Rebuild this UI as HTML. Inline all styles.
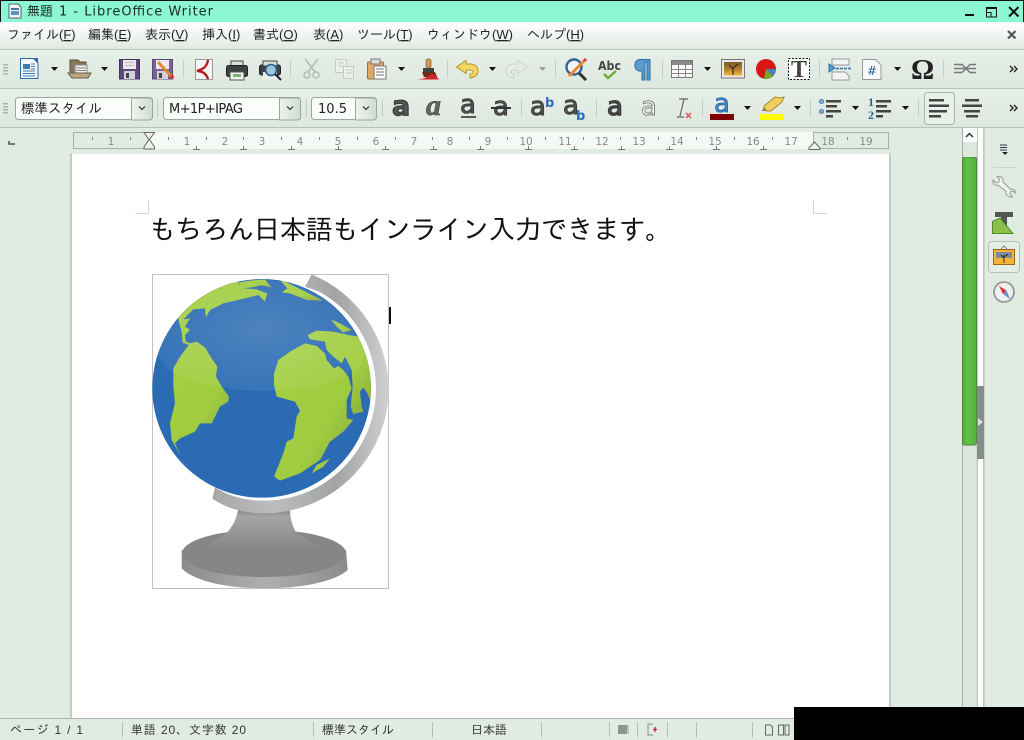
<!DOCTYPE html>
<html lang="ja"><head><meta charset="utf-8"><title>無題 1 - LibreOffice Writer</title>
<style>
html,body{margin:0;padding:0;background:#e0ebe2;width:1024px;height:740px;overflow:hidden}
svg{display:block;position:absolute;left:0;top:0}
text{font-family:"Liberation Sans","IPAGothic","Noto Sans CJK JP",sans-serif;white-space:pre}
.m{font-size:13px;fill:#222}
.r{font-size:10.5px;fill:#888;text-anchor:middle;font-family:"DejaVu Sans","Liberation Sans",sans-serif}
.s{font-size:12px;fill:#333}
.a{font-family:"DejaVu Sans","Liberation Sans",sans-serif;font-size:26px;fill:#555;stroke:#3a3a3a;stroke-width:1}
</style></head><body>
<svg width="1024" height="740" viewBox="0 0 1024 740" xmlns="http://www.w3.org/2000/svg">
<defs>
<linearGradient id="mg" x1="0" y1="0" x2="0" y2="1"><stop offset="0" stop-color="#fff"/><stop offset=".35" stop-color="#f4f8f5"/><stop offset="1" stop-color="#dfeae1"/></linearGradient>
<linearGradient id="tb" x1="0" y1="0" x2="0" y2="1"><stop offset="0" stop-color="#e6efe8"/><stop offset="1" stop-color="#dde8df"/></linearGradient>
<linearGradient id="sb" x1="0" y1="0" x2="1" y2="0"><stop offset="0" stop-color="#4fae3c"/><stop offset=".35" stop-color="#62c148"/><stop offset="1" stop-color="#54b03e"/></linearGradient>
<linearGradient id="cb" x1="0" y1="0" x2="1" y2="0"><stop offset="0" stop-color="#eef4ef"/><stop offset="1" stop-color="#cfdcd2"/></linearGradient>
<linearGradient id="arc" x1="0" y1="0" x2="1" y2="0"><stop offset="0" stop-color="#a5a6a8"/><stop offset=".35" stop-color="#bcbdbf"/><stop offset=".7" stop-color="#a2a3a5"/><stop offset="1" stop-color="#cfd0d1"/></linearGradient>
<linearGradient id="stem" x1="0" y1="0" x2="0" y2="1"><stop offset="0" stop-color="#7f8082"/><stop offset=".2" stop-color="#a4a5a7"/><stop offset="1" stop-color="#848586"/></linearGradient>
<linearGradient id="base" x1="0" y1="0" x2="1" y2="0"><stop offset="0" stop-color="#8a8b8d"/><stop offset=".5" stop-color="#aeafb1"/><stop offset="1" stop-color="#8a8b8d"/></linearGradient>
<linearGradient id="land" x1="0" y1="0" x2="1" y2="1"><stop offset="0" stop-color="#a4cf45"/><stop offset=".6" stop-color="#a0cc40"/><stop offset="1" stop-color="#8aa93c"/></linearGradient>
<linearGradient id="pic" x1="0" y1="0" x2="0" y2="1"><stop offset="0" stop-color="#7d5a2c"/><stop offset=".55" stop-color="#b07f30"/><stop offset="1" stop-color="#f5bd3f"/></linearGradient>
<radialGradient id="hl" cx=".5" cy=".45" r=".6"><stop offset="0" stop-color="#fff" stop-opacity=".16"/><stop offset="1" stop-color="#fff" stop-opacity=".05"/></radialGradient>
<clipPath id="gc"><circle cx="395" cy="385" r="328"/></clipPath>
<path id="dd" d="M0 0h7l-3.500 4z" fill="#111"/>
<path id="more" d="M0 0l3 3-3 3M4 0l3 3-3 3" fill="none" stroke="#222" stroke-width="1.400"/>
<g id="grip" fill="#a9b5ab"><rect width="5" height="1.500"/><rect y="3" width="5" height="1.500"/><rect y="6" width="5" height="1.500"/><rect y="9" width="5" height="1.500"/></g>
</defs>

<rect width="1024" height="740" fill="#e0ebe2"/>
<!-- title bar -->
<rect width="1024" height="22" fill="#8cf7d3"/>
<rect width="1024" height="1" fill="#111"/><rect width="1" height="22" fill="#111"/><rect x="1023" width="1" height="22" fill="#111"/>
<path d="M9 4h9l3 3v11H9z" fill="#f4f7fa" stroke="#55607a"/><rect x="11" y="8" width="8" height="2" fill="#3f78ad"/><rect x="11" y="11" width="8" height="4" fill="#5f93bf"/>
<text x="27" y="15.500" style="font-size:13px;fill:#1b2b26">無題</text>
<text x="59" y="15.500" style="font-size:13px;fill:#1b2b26;font-family:'DejaVu Sans',sans-serif" textLength="154">1 - LibreOffice Writer</text>
<rect x="965" y="14" width="9" height="2" fill="#111"/>
<path d="M986.500 7.500h10v9.500h-10zM986.500 12.500h4.500v4.500" fill="none" stroke="#111"/><rect x="986" y="7" width="11" height="2" fill="#111"/>
<path d="M1009 7l9.500 9.500M1018.500 7l-9.500 9.500" stroke="#111" stroke-width="2"/>

<!-- menu -->
<rect y="22" width="1024" height="27" fill="url(#mg)"/>
<text class="m" x="7" y="39">ファイル(<tspan text-decoration="underline">F</tspan>)</text>
<text class="m" x="88" y="39">編集(<tspan text-decoration="underline">E</tspan>)</text>
<text class="m" x="145" y="39">表示(<tspan text-decoration="underline">V</tspan>)</text>
<text class="m" x="202" y="39">挿入(<tspan text-decoration="underline">I</tspan>)</text>
<text class="m" x="253" y="39">書式(<tspan text-decoration="underline">O</tspan>)</text>
<text class="m" x="313" y="39">表(<tspan text-decoration="underline">A</tspan>)</text>
<text class="m" x="357" y="39">ツール(<tspan text-decoration="underline">T</tspan>)</text>
<text class="m" x="427" y="39">ウィンドウ(<tspan text-decoration="underline">W</tspan>)</text>
<text class="m" x="527" y="39">ヘルプ(<tspan text-decoration="underline">H</tspan>)</text>
<path d="M1008 31l7.500 7.500M1015.500 31l-7.500 7.500" stroke="#555" stroke-width="2.200"/>

<!-- toolbars -->
<rect y="49" width="1024" height="1" fill="#b9c8bc"/>
<rect y="50" width="1024" height="38" fill="url(#tb)"/>
<rect y="88" width="1024" height="1" fill="#b4c4b8"/>
<rect y="89" width="1024" height="38" fill="url(#tb)"/>
<rect y="127" width="1024" height="1" fill="#b4c4b8"/>
<use href="#grip" x="3" y="64"/><use href="#grip" x="3" y="103"/>
<g fill="#c3cfc6">
<rect x="183" y="60" width="1" height="18"/><rect x="290" y="60" width="1" height="18"/><rect x="447" y="60" width="1" height="18"/><rect x="555" y="60" width="1" height="18"/><rect x="662" y="60" width="1" height="18"/><rect x="819" y="60" width="1" height="18"/><rect x="943" y="60" width="1" height="18"/>
<rect x="157" y="99" width="1" height="18"/><rect x="306" y="99" width="1" height="18"/><rect x="382" y="99" width="1" height="18"/><rect x="521" y="99" width="1" height="18"/><rect x="596" y="99" width="1" height="18"/><rect x="702" y="99" width="1" height="18"/><rect x="810" y="99" width="1" height="18"/><rect x="918" y="99" width="1" height="18"/>
</g>
<use href="#dd" x="51" y="67"/><use href="#dd" x="101" y="67"/><use href="#dd" x="398" y="67"/><use href="#dd" x="489" y="67"/><use href="#dd" x="539" y="67" opacity=".35"/><use href="#dd" x="704" y="67"/><use href="#dd" x="894" y="67"/>
<use href="#dd" x="744" y="106"/><use href="#dd" x="794" y="106"/><use href="#dd" x="852" y="106"/><use href="#dd" x="902" y="106"/>
<use href="#more" x="1010" y="66"/><use href="#more" x="1010" y="105"/>

<!-- new doc -->
<path d="M20.500 58.500h13l4.500 4.500v15.500h-17.500z" fill="#f5f8fb" stroke="#2a6aa0"/><path d="M33 58l5 0v5z" fill="#2a6aa0"/>
<rect x="23" y="64" width="7" height="5" fill="#3a7db5"/><path d="M31 64h4M31 66.500h4M31 69h4M23 71h12M23 73.500h12M23 76h12" stroke="#3a7db5" stroke-width="1"/>
<!-- open -->
<path d="M70 60h8l2 2h6v12H70z" fill="#8a7658" stroke="#5c4c36"/><rect x="75" y="65" width="12" height="9" fill="#eee" stroke="#888"/><path d="M76 68h10M76 70.500h10" stroke="#888"/><path d="M68 73h23l-3 5H72z" fill="#b9a78a" stroke="#6e5d44"/>
<!-- save -->
<path d="M119.500 59.500h20v19.500h-20z" fill="#5d4a78" stroke="#43335c"/><rect x="123" y="60" width="13" height="9" fill="#e9e9ef"/><path d="M125 62.500h9M125 65.500h9" stroke="#bbb"/><rect x="124" y="71" width="11" height="8" fill="#d3d0db"/><rect x="126" y="73" width="3" height="5" fill="#444"/>
<!-- save as -->
<path d="M152.500 59.500h20v19.500h-20z" fill="#7a6292" stroke="#5c4873"/><rect x="156" y="60" width="13" height="9" fill="#e9e9ef"/><rect x="157" y="71" width="11" height="8" fill="#d3d0db"/><rect x="159" y="73" width="3" height="5" fill="#444"/>
<path d="M158 62l13 14" stroke="#e58a2a" stroke-width="3"/><circle cx="172" cy="77" r="2" fill="#d33"/>
<!-- pdf -->
<rect x="195.500" y="59.500" width="17" height="20" fill="#f5f5f5" stroke="#999"/><path d="M208 60c-1 7-5 9-11 11 5 0 9 2 11 8" fill="none" stroke="#b71c1c" stroke-width="2.400"/>
<!-- print -->
<path d="M231 61h12v5h-12z" fill="#ddd" stroke="#444"/><rect x="226.500" y="65.500" width="21" height="11" rx="2" fill="#3e4245" stroke="#222"/><rect x="230" y="72" width="14" height="8" fill="#eef5ec" stroke="#555"/><rect x="233" y="74" width="8" height="3" fill="#7cb46b"/>
<!-- preview -->
<rect x="259.500" y="65" width="21" height="10" rx="2" fill="#3e4245" stroke="#222"/><rect x="263" y="61" width="14" height="5" fill="#ddd" stroke="#444"/><rect x="263" y="72" width="14" height="7" fill="#eee"/><circle cx="271" cy="70" r="5.500" fill="#9bc4dd" stroke="#2b5d8f" stroke-width="1.600"/><path d="M275 74l6 6" stroke="#223" stroke-width="2"/>
<!-- cut -->
<g fill="none" stroke="#b5bdb7" stroke-width="1.600"><path d="M305 59l10 13M318 59l-10 13"/><circle cx="307" cy="75" r="3"/><circle cx="316" cy="75" r="3"/></g>
<!-- copy -->
<g fill="#eaf0eb" stroke="#c2cbc4"><rect x="335.500" y="59.500" width="11" height="13"/><rect x="343.500" y="66.500" width="10" height="12"/><path d="M338 63h6M338 66h6M346 70h6M346 73h6" fill="none"/></g>
<!-- paste -->
<rect x="367.500" y="62" width="16" height="17" rx="1" fill="#dfa866" stroke="#9b7136"/><rect x="371" y="59" width="9" height="5" fill="#ddd" stroke="#777"/><rect x="374" y="66" width="12" height="13" fill="#fafafa" stroke="#777"/><path d="M376 69h8M376 72h8M376 75h8" stroke="#777"/>
<!-- brush -->
<rect x="426" y="59" width="5" height="9" rx="2" fill="#cf9c53" stroke="#8b6326" stroke-width=".8"/><path d="M423 68h11v4h-11z" fill="#444"/><path d="M422 72h13l2 5h-13z" fill="#6e2a1c"/><path d="M416 79.500c6 0 12-2 16-6 3 2 6 4 7 6z" fill="#d4232b"/>
<!-- undo -->
<path d="M456.500 67L466 60.500V64H470C480.500 64 481 77 470 78V74C474 74 474 70 470 70H466V73.500Z" fill="#f3d963" stroke="#b8962a"/>
<!-- redo -->
<path d="M527.500 67L518 60.500V64H514C503.500 64 503 77 514 78V74C510 74 510 70 514 70H518V73.500Z" fill="#e4ebe6" stroke="#c9d2cb"/>
<!-- find -->
<circle cx="574" cy="67" r="7.500" fill="#f2f5f8" stroke="#3a5f93" stroke-width="2.400"/><path d="M579 73l7 7" stroke="#333" stroke-width="3"/><path d="M569 76l15-15" stroke="#e58a2a" stroke-width="3"/><path d="M584 61l2-2" stroke="#d33" stroke-width="3"/>
<!-- Abc -->
<text x="598" y="70" textLength="23" lengthAdjust="spacingAndGlyphs" style="font-family:'DejaVu Sans',sans-serif;font-weight:bold;font-size:12px;fill:#444">Abc</text>
<path d="M604 74l4 4 8-7" fill="none" stroke="#6cab2f" stroke-width="2.400"/>
<!-- pilcrow -->
<path d="M650 59.500H640C633 59.500 633 71 640 71H642V80H645V62H647V80H650Z" fill="#5a9ad0" stroke="#2d6ca5"/>
<!-- table -->
<rect x="671.500" y="60.500" width="21" height="17" fill="#fafafa" stroke="#777"/><rect x="672" y="61" width="20" height="4" fill="#8b8b8b"/><path d="M671 69.500h21M671 73.500h21M678.500 60v17M685.500 60v17" stroke="#888"/>
<!-- image -->
<rect x="721.500" y="59.500" width="23" height="18.500" fill="#e9e9e9" stroke="#777"/><rect x="724" y="62" width="18" height="13.500" fill="url(#pic)"/><path d="M733 75v-8M733 69l-4-4M733 68l5-4" stroke="#3a2a18" stroke-width="1.200"/>
<!-- chart -->
<circle cx="766" cy="69" r="10" fill="#d81616"/><path d="M766 69h10a10 10 0 0 1-3 7z" fill="#4d80b8"/><path d="M766 69l7 7a10 10 0 0 1-9 3z" fill="#6cab2f"/>
<!-- textbox -->
<rect x="788.500" y="58.500" width="21" height="21" fill="#fff" stroke="#111" stroke-dasharray="2 1.500"/><text x="791" y="77" style="font-family:'Liberation Serif',serif;font-weight:bold;font-size:24px;fill:#444">T</text>
<!-- nav -->
<path d="M832 59h17v6h-17zM832 72h13l4 4v4h-17z" fill="#f2f5f2" stroke="#999"/><path d="M829 64l6 4-6 4z" fill="#5b9fd6" stroke="#2d6ca5"/><path d="M836 68.500h15" stroke="#2d6ca5" stroke-width="1.500" stroke-dasharray="3 1"/>
<!-- field -->
<path d="M862.500 59.500h13l5.500 5.500v14.500h-18.500z" fill="#f8f9fb" stroke="#999"/><text x="867" y="75" style="font-family:'DejaVu Sans',sans-serif;font-size:12px;fill:#2d5f9b">#</text>
<!-- omega -->
<text x="911" y="79" style="font-family:'Liberation Serif',serif;font-weight:bold;font-size:29px;fill:#222">Ω</text>
<!-- link -->
<path d="M954 64.500H962L970 72.500H976M954 72.500H962L970 64.500H976M954 68.500h22" stroke="#777" stroke-width="1.400" fill="none"/>

<!-- combos -->
<rect x="15.500" y="97.500" width="137" height="22" rx="3" fill="#fbfdfb" stroke="#9aa79d"/><path d="M131.500 98h18a3 3 0 0 1 3 3v16a3 3 0 0 1-3 3h-18z" fill="url(#cb)" stroke="#9aa79d"/>
<rect x="163.500" y="97.500" width="137" height="22" rx="3" fill="#fbfdfb" stroke="#9aa79d"/><path d="M279.500 98h18a3 3 0 0 1 3 3v16a3 3 0 0 1-3 3h-18z" fill="url(#cb)" stroke="#9aa79d"/>
<rect x="311.500" y="97.500" width="65" height="22" rx="3" fill="#fbfdfb" stroke="#9aa79d"/><path d="M355.500 98h18a3 3 0 0 1 3 3v16a3 3 0 0 1-3 3h-18z" fill="url(#cb)" stroke="#9aa79d"/>
<path d="M139 106.500l3 3 3-3M287 106.500l3 3 3-3M363 106.500l3 3 3-3" fill="none" stroke="#444" stroke-width="1.300"/>
<text x="21" y="113" style="font-size:13.500px;fill:#222">標準スタイル</text>
<text x="169" y="113" style="font-family:'DejaVu Sans',sans-serif;font-size:13px;fill:#222" textLength="74">M+1P+IPAG</text>
<text x="318" y="113" style="font-family:'DejaVu Sans',sans-serif;font-size:13px;fill:#222" textLength="29">10.5</text>

<!-- char format -->
<text class="a" x="392" y="115" style="font-weight:bold;font-size:27px;stroke-width:1.200">a</text>
<text class="a" x="426" y="115" style="font-weight:bold;font-style:italic;font-family:'Liberation Serif',serif;font-size:30px;fill:#666;stroke-width:.6">a</text>
<text class="a" x="460" y="113">a</text><rect x="461" y="116" width="15" height="2" fill="#555"/>
<text class="a" x="493" y="115">a</text><rect x="491" y="107" width="20" height="2" fill="#333"/>
<text class="a" x="530" y="115">a</text><text x="545" y="107" style="font-family:'DejaVu Sans',sans-serif;font-size:13px;font-weight:bold;fill:#2e6eb5">b</text>
<text class="a" x="563" y="114">a</text><text x="576" y="120" style="font-family:'DejaVu Sans',sans-serif;font-size:13px;font-weight:bold;fill:#2e6eb5">b</text>
<text class="a" x="607" y="115" style="stroke-width:1.400">a</text>
<text class="a" x="641" y="115" style="fill:#fff;stroke:#666;stroke-width:.8">a</text>
<path d="M684 99l-4 17M679 99h9M677 117h7" stroke="#666" stroke-width="1.200" fill="none"/><path d="M686 113l5 5M691 113l-5 5" stroke="#e25b6a" stroke-width="1.600"/>
<text class="a" x="714" y="112" style="fill:#4d8ccc;stroke:#245f9e;stroke-width:.8">a</text><rect x="710" y="114" width="24" height="6" fill="#800000"/>
<path d="M764 106l11-9 6 1 3-1-2 5-11 9h-4l-3-2z" fill="#f0cf5f" stroke="#a88a2b"/><path d="M764 107l3 4h-5z" fill="#8c7a3a"/><rect x="760" y="114" width="24" height="6" fill="#ffff00"/>

<!-- lists -->
<g fill="#7ea7d3" stroke="#3e6ea3" stroke-width=".7"><circle cx="821.500" cy="101.500" r="2.200"/><circle cx="821.500" cy="111.500" r="2.200"/></g>
<g fill="#444"><rect x="826" y="100" width="15" height="2.500"/><rect x="826" y="105" width="11" height="2.500"/><rect x="826" y="110" width="15" height="2.500"/><rect x="826" y="115" width="7" height="2.500"/>
<rect x="876" y="100" width="15" height="2.500"/><rect x="876" y="105" width="11" height="2.500"/><rect x="876" y="110" width="15" height="2.500"/><rect x="876" y="115" width="7" height="2.500"/></g>
<text x="868" y="106" style="font-family:'Liberation Serif',serif;font-weight:bold;font-size:12px;fill:#2d5f9b">1</text>
<text x="868" y="119" style="font-family:'Liberation Serif',serif;font-weight:bold;font-size:12px;fill:#2d5f9b">2</text>

<!-- align -->
<rect x="924.500" y="92.500" width="30" height="32" rx="3" fill="#e7f0e9" stroke="#a3b3a7"/>
<g fill="#444"><rect x="929" y="99" width="15" height="2.500"/><rect x="929" y="104.500" width="20" height="2.500"/><rect x="929" y="110" width="18" height="2.500"/><rect x="929" y="115" width="12" height="2.500"/>
<rect x="965" y="99" width="14" height="2.500"/><rect x="962" y="104.500" width="20" height="2.500"/><rect x="964" y="110" width="16" height="2.500"/><rect x="966" y="115" width="12" height="2.500"/></g>

<!-- ruler -->
<path d="M9 141v3h6" fill="none" stroke="#555" stroke-width="1.600"/>
<rect x="149" y="132" width="665" height="17" fill="#f5f9f6"/>
<rect x="73.500" y="132.500" width="76" height="16" fill="#e0ebe2" stroke="#a5b0a8"/>
<rect x="813.500" y="132.500" width="75" height="16" fill="#e0ebe2" stroke="#a5b0a8"/>
<text class="r" x="111" y="145">1</text><text class="r" x="187" y="145">1</text><text class="r" x="225" y="145">2</text><text class="r" x="262" y="145">3</text><text class="r" x="300" y="145">4</text><text class="r" x="338" y="145">5</text><text class="r" x="376" y="145">6</text><text class="r" x="414" y="145">7</text><text class="r" x="450" y="145">8</text><text class="r" x="488" y="145">9</text><text class="r" x="526" y="145">10</text><text class="r" x="565" y="145">11</text><text class="r" x="602" y="145">12</text><text class="r" x="639" y="145">13</text><text class="r" x="677" y="145">14</text><text class="r" x="715" y="145">15</text><text class="r" x="753" y="145">16</text><text class="r" x="791" y="145">17</text><text class="r" x="828" y="145">18</text><text class="r" x="866" y="145">19</text>
<path d="M92.500 137v3M130.500 137v3M168.500 137v3M206.500 137v3M243.500 137v3M281.500 137v3M319.500 137v3M357.500 137v3M395.500 137v3M432.500 137v3M469.500 137v3M507.500 137v3M545.500 137v3M583.500 137v3M620.500 137v3M658.500 137v3M696.500 137v3M734.500 137v3M772.500 137v3M847.500 137v3" stroke="#888"/>
<path d="M196.500 146v4M193 149.500h7M243.500 146v4M240 149.500h7M291.500 146v4M288 149.500h7M338.500 146v4M335 149.500h7M385.500 146v4M382 149.500h7M433.500 146v4M430 149.500h7M480.500 146v4M477 149.500h7M528.500 146v4M525 149.500h7M574.500 146v4M571 149.500h7M621.500 146v4M618 149.500h7M669.500 146v4M666 149.500h7M716.500 146v4M713 149.500h7M763.500 146v4M760 149.500h7" stroke="#777" fill="none"/>
<path d="M144 132.500h10.500l-5 7 5 7.500v2h-10.500v-2l5-7.500-5-7z" fill="#eef3ef" stroke="#666"/>
<path d="M814.500 142l5.500 6v1.500h-11v-1.500z" fill="#eef3ef" stroke="#666"/>

<!-- page -->
<rect x="70" y="153" width="2" height="565" fill="#c2cbc4"/>
<rect x="889" y="153" width="2" height="565" fill="#c2cbc4"/>
<rect x="72" y="154" width="817" height="564" fill="#fff"/>
<path d="M135 213.500h13.500V200M813.500 200v13.500H827" fill="none" stroke="#d6d6d6"/>
<text x="149" y="239" style="font-family:'IPAGothic','Noto Sans CJK JP',sans-serif;font-size:27px;fill:#111" textLength="523">もちろん日本語もインライン入力できます。</text>

<!-- globe -->
<rect x="152.500" y="274.500" width="236" height="314" fill="#fff" stroke="#c2c2c2"/>
<g transform="translate(130 260) scale(.33333)">
<path d="M155 870v55c40 40 140 60 250 60s210-20 248-55l-5-60z" fill="url(#base)"/>
<ellipse cx="402" cy="880" rx="246" ry="71" fill="#858687"/>
<path d="M325 745c-5 30-15 50-30 68-15 15-45 30-75 48 50 15 320 15 365 0-40-15-75-30-90-50-10-20-15-40-15-66z" fill="url(#stem)"/>
<path d="M545 43A375 375 0 0 1 776 385 375 375 0 0 1 402 760C340 760 290 745 247 716L255 682C300 710 350 722 400 722 590 722 738 570 738 385 738 260 670 150 567 95 L525 80Z" fill="url(#arc)"/>
<circle cx="395" cy="385" r="328" fill="#2b6bb3"/>
<g clip-path="url(#gc)" fill="url(#land)">
<path d="M130 325L150 290 180 250 200 245 225 262 245 295 262 320 258 350 275 380 297 410 295 425 270 440 245 490 210 490 195 515 150 535 135 550 152 588 125 540 120 490 135 430 130 380Z"/>
<path d="M145 175L60 60H325L325 73 345 85 380 88 412 100 405 125 385 105 345 115 280 130 240 150 228 172 225 145 190 148 160 178 180 175 165 200 180 210 165 225 168 245 182 250 175 255 158 248 155 215 148 190Z"/>
<path d="M325 68L360 62 405 58 425 82 395 76 365 82 335 85Z"/>
<path d="M445 55L480 72 580 122 530 120 480 100 455 97 472 85Z"/>
<path d="M432 340L445 300 480 275 525 250 560 258 585 280 590 300 612 325 625 318 640 330 655 350 665 385 650 420 650 475 670 480 640 515 600 545 570 600 510 640 450 662 432 650 460 580 470 545 490 535 500 470 510 452 495 425 440 410 432 375Z"/>
<path d="M533 225L560 212 610 215 655 225 685 230 710 280 735 350 730 445 712 400 700 382 690 395 695 440 700 455 670 462 662 440 668 380 665 330 645 290 635 310 610 290 590 270 585 245 540 238Z"/>
<path d="M603 178L630 190 665 210 640 218 620 200Z"/>
<path d="M545 640L560 615 600 595 580 620Z"/>
</g>
<path d="M85 280A328 328 0 0 1 705 280C700 350 560 392 400 392 240 392 90 350 85 280Z" fill="url(#hl)"/>
</g>
<rect x="389" y="307" width="2" height="17" fill="#111"/>

<!-- scrollbar -->
<rect x="962" y="128" width="15" height="590" fill="#dbe6dd"/>
<rect x="962" y="128" width="1" height="590" fill="#a3b3a7"/><rect x="976.500" y="128" width="1" height="590" fill="#c3cfc6"/>
<rect x="963" y="128" width="14" height="14" fill="#f8fbf9"/><path d="M966 137l3.500-3.500 3.500 3.500" fill="none" stroke="#333" stroke-width="1.500"/>
<rect x="962.500" y="157" width="14" height="288" rx="2" fill="url(#sb)" stroke="#4a8c3a"/>
<rect x="963" y="142" width="13" height="15" fill="#dde8df"/>
<rect x="978" y="128" width="5" height="590" fill="#fff"/>
<rect x="977" y="128" width="1" height="590" fill="#bccabf"/><rect x="983" y="128" width="1" height="590" fill="#bccabf"/>
<rect x="977" y="386" width="7" height="73" fill="#848d87"/>
<path d="M978 418l5 4-5 4z" fill="#dde3de"/>

<!-- sidebar -->
<path d="M1000 145h7M1000 147.500h7M1000 150h7" stroke="#334" stroke-width="1"/><path d="M1002 152h6l-3 3z" fill="#223"/>
<rect x="993" y="167" width="23" height="1" fill="#ccd6ce"/>
<path d="M993 180L996 183 999 182 999.500 179 997 176.500C1001 175.500 1004 179 1003 182L1011 189.500C1013 188.500 1015.500 190 1015.500 193L1013 191 1010.500 191.500 1010 194 1012.500 197C1008 197.500 1005 194 1006 191.500L998 185C995 186 992.500 184 993 180Z" fill="#eef1ee" stroke="#999"/>
<rect x="995" y="212" width="18" height="5" fill="#555"/><rect x="1001" y="213" width="6" height="20" fill="#555"/>
<path d="M992.500 233.500V221.500L1000 218 1013 233.500Z" fill="#8cc04a" stroke="#4f8a2a"/>
<rect x="988.500" y="241.500" width="31" height="31" rx="3" fill="#e4ede6" stroke="#b5c2b8"/>
<rect x="993.500" y="249.500" width="21" height="15" fill="#efb53a" stroke="#a0651c"/><rect x="996" y="252" width="16" height="6" fill="#7c8ba0"/><path d="M1004 263v-8M1004 258l-3-3M1004 257l4-3" stroke="#3a2a18"/><path d="M1001 249l3-3 3 3" fill="none" stroke="#888"/>
<circle cx="1004" cy="292" r="10" fill="#eef0f0" stroke="#999" stroke-width="1.800"/><path d="M999 286L1006.500 290.500 1003 294Z" fill="#d33"/><path d="M1010 299L1006.500 290.500 1003 294Z" fill="#6a8fc5"/>
<rect x="984" y="128" width="1" height="590" fill="#c9d5cc"/>

<!-- status -->
<rect y="718" width="1024" height="22" fill="#e0ebe2"/>
<rect y="718" width="1024" height="1" fill="#a8b3ab"/>
<text class="s" x="10" y="734" textLength="73">ページ 1 / 1</text>
<text class="s" x="131" y="734" textLength="115">単語 20、文字数 20</text>
<text class="s" x="322" y="734">標準スタイル</text>
<text class="s" x="471" y="734">日本語</text>
<g fill="#b3bfb6"><rect x="122" y="722" width="1" height="15"/><rect x="313" y="722" width="1" height="15"/><rect x="432" y="722" width="1" height="15"/><rect x="541" y="722" width="1" height="15"/><rect x="609" y="722" width="1" height="15"/><rect x="637" y="722" width="1" height="15"/><rect x="667" y="722" width="1" height="15"/><rect x="696" y="722" width="1" height="15"/><rect x="752" y="722" width="1" height="15"/></g>
<rect x="618" y="725" width="9" height="9" fill="#8c9690"/><path d="M628 725v9" stroke="#999"/>
<path d="M653 724h-5v11h5" stroke="#888" fill="none"/><path d="M655 727v5M653 729.500h4" stroke="#c22" stroke-width="1.300"/>
<path d="M765.500 725h5l2 2v8h-7zM778.500 725h5v10h-5zM785 725h4v10h-4z" fill="none" stroke="#666"/>
<rect x="794" y="707" width="230" height="33" fill="#000"/>
</svg>
</body></html>
